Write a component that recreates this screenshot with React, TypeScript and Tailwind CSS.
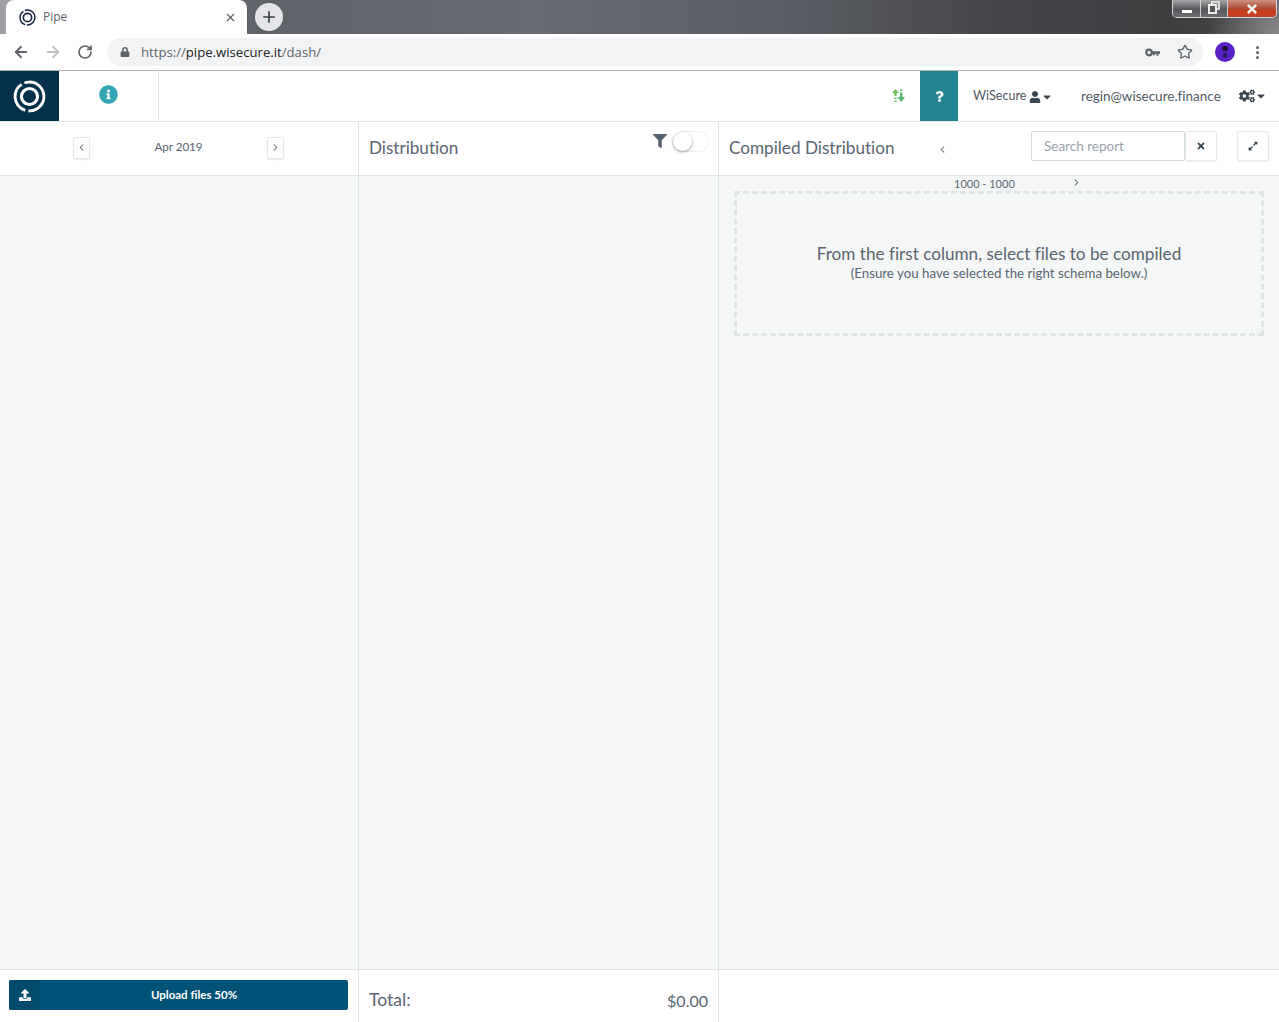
import React from "react";
import { ArrowLeft, ArrowRight, RotateCw, Star, Plus, X, ChevronLeft, ChevronRight } from "lucide-react";
import { FaUser, FaCogs, FaCaretDown, FaFilter, FaTimes, FaExpandAlt, FaQuestion, FaInfoCircle, FaLock, FaUpload } from "react-icons/fa";

function Logo({ size, color }: { size: number; color: string }) {
  return (
    <svg width={size} height={size} viewBox="0 0 32 32" fill="none" stroke={color}>
      <circle cx="16" cy="16" r="14" strokeWidth="2.8" strokeDasharray="23.5 3 31.5 3 27 0" transform="rotate(-2 16 16)" />
      <circle cx="16" cy="16" r="7.8" strokeWidth="3" />
    </svg>
  );
}

function PagerBtn({ right }: { right?: boolean }) {
  return (
    <div className="flex h-[22px] w-[17px] items-center justify-center rounded-[2px] border border-[#e4e9ea] bg-white shadow-[0_1px_1px_rgba(0,0,0,0.08)]">
      {right ? <ChevronRight size={11} strokeWidth={2.2} className="text-[#5a6672]" /> : <ChevronLeft size={11} strokeWidth={2.2} className="text-[#5a6672]" />}
    </div>
  );
}

export default function App() {
  return (
    <div className="flex h-[1022px] w-[1279px] flex-col overflow-hidden bg-white font-['Lato','Noto_Sans',sans-serif] text-[#56616b] [font-variant-ligatures:none]">
      {/* window title strip */}
      <div className="flex h-[34px] items-end bg-[radial-gradient(circle_at_100%_100%,#8a8a8c_0%,rgba(138,138,140,0)_70px),linear-gradient(90deg,#9d9ea2_0%,#a0a1a5_0.5%,#5f6269_20%,#666a72_42%,#5a5d64_62%,#444548_78%,#3d3e40_92%,#4a4a4c_100%)]">
        <div className="ml-[6px] flex h-[34px] w-[241px] items-center rounded-t-[8px] bg-white pl-[13px] pr-[10px]">
          <Logo size={17} color="#16233f" />
          <span className="ml-[7px] flex-1 font-['Open_Sans',sans-serif] text-[12px] text-[#5f6368]">Pipe</span>
          <X size={13} strokeWidth={2} className="text-[#55585d]" />
        </div>
        <div className="mb-[3px] ml-[8px] flex h-[28px] w-[28px] items-center justify-center rounded-full bg-[#e3e5e9]">
          <Plus size={18} strokeWidth={2.2} className="text-[#3b3e43]" />
        </div>
        <div className="flex-1" />
        <div className="mb-[16px] mr-[2px] flex h-[18px] w-[105px] overflow-hidden rounded-b-[5px] border border-t-0 border-[#d6d6d6]">
          <div className="flex w-[28px] items-end justify-center border-r border-[#cfcfcf] bg-[linear-gradient(#a4a5a7,#55575a_55%,#6c6e72)] pb-[4px]">
            <div className="h-[3px] w-[10px] bg-white" />
          </div>
          <div className="relative w-[27px] border-r border-[#cfcfcf] bg-[linear-gradient(#a4a5a7,#55575a_55%,#6c6e72)]">
            <div className="absolute left-[10px] top-[1px] h-[9px] w-[9px] border-2 border-[#dddddd]" />
            <div className="absolute left-[7px] top-[4px] h-[10px] w-[9px] border-2 border-[#eeeeee] bg-[#55575a]" />
          </div>
          <div className="flex flex-1 items-center justify-center bg-[linear-gradient(#c9907f,#b04a34_50%,#cf3a1c_75%,#b8452f)]">
            <FaTimes size={14} className="text-[#eeeeee]" />
          </div>
        </div>
      </div>

      {/* toolbar */}
      <div className="flex h-[37px] items-center border-b border-[#b4b4b4] bg-white pr-[14px]">
        <ArrowLeft size={18} strokeWidth={2.4} className="ml-[12px] text-[#5f6368]" />
        <ArrowRight size={18} strokeWidth={2.4} className="ml-[14px] text-[#bdbfc2]" />
        <RotateCw size={16} strokeWidth={2.6} className="ml-[15px] text-[#5f6368]" />
        <div className="ml-[14px] flex h-[28px] w-[1096px] items-center rounded-full bg-[#f1f3f4] pl-[13px] pr-[10px]">
          <FaLock size={10} className="text-[#5f6368]" />
          <span className="ml-[11px] flex-1 pt-[1px] font-['Open_Sans',sans-serif] text-[13.15px] text-[#5f6368]">
            https://<span className="text-[#202124]">pipe.wisecure.it</span>/dash/
          </span>
          <svg width="15" height="9" viewBox="0 0 15 9" className="mr-[17px] text-[#5f6368]" fill="none">
            <circle cx="4" cy="4.5" r="2.8" stroke="currentColor" strokeWidth="2.2" />
            <path d="M7 3.2h8v2.6h-1.5v2h-2v-2H10v1.4H8V5.8H7z" fill="currentColor" />
          </svg>
          <Star size={16} strokeWidth={2} className="text-[#5f6368]" />
        </div>
        <div className="ml-[12px] flex h-[20px] w-[20px] flex-col items-center justify-center rounded-full bg-[#5b21c9]">
          <div className="h-[5px] w-[6px] rounded-full bg-[#1d1530]" />
          <div className="mt-[2px] h-[5px] w-[4px] rounded-b-full bg-[#2e1a66]" />
        </div>
        <div className="ml-[21px] flex flex-col gap-[2px]">
          <div className="h-[3px] w-[3px] rounded-full bg-[#5f6368]" />
          <div className="h-[3px] w-[3px] rounded-full bg-[#5f6368]" />
          <div className="h-[3px] w-[3px] rounded-full bg-[#5f6368]" />
        </div>
      </div>

      {/* app header */}
      <div className="flex h-[51px] border-b border-[#e4e8e8] bg-white">
        <div className="flex h-[50px] w-[59px] items-center justify-center bg-[#022f4a]">
          <Logo size={33} color="#ffffff" />
        </div>
        <div className="flex w-[100px] items-start justify-center border-r border-[#e4e8e8] pt-[14px]">
          <FaInfoCircle size={19} className="text-[#33a5b5]" />
        </div>
        <div className="flex-1" />
        <div className="flex items-center pb-[1px]">
          <svg width="13" height="15" viewBox="0 0 13 15" fill="none">
            <path d="M0 5 L3.5 1 L7 5 H4.7 V8 H2.3 V5 Z" fill="#6fbf58" />
            <path d="M2.3 9.5h2.4v1.5H2.3zM2.3 12.5h2.4v1.5H2.3z" fill="#7cc26a" />
            <path d="M8 1.5h2.4V3H8zM8 4.5h2.4V9H13L9.2 14 5.4 9H8z" fill="#54b66d" />
          </svg>
        </div>
        <div className="ml-[15px] flex h-[50px] w-[38px] items-center justify-center bg-[#248590]">
          <FaQuestion size={11} className="text-white" />
        </div>
        <div className="ml-[15px] flex w-[108px] items-center pt-[1px] text-[12.6px] text-[#4f5a64]">
          WiSecure
          <FaUser size={12} className="ml-[3px] text-[#3a4650]" />
          <FaCaretDown size={12} className="text-[#3a4650]" />
        </div>
        <div className="flex w-[158px] items-center pt-[1px] text-[13.5px] text-[#4f5a64]">regin@wisecure.finance</div>
        <div className="flex w-[40px] items-center">
          <FaCogs size={16} className="text-[#3a4650]" />
          <FaCaretDown size={12} className="text-[#3a4650]" />
        </div>
      </div>

      {/* columns */}
      <div className="flex min-h-0 flex-1">
        <section className="flex w-[359px] flex-col border-r border-[#e1e6e6]">
          <div className="flex h-[54px] items-center border-b border-[#e1e6e6] bg-white pb-[2px] pl-[73px]">
            <PagerBtn />
            <div className="w-[177px] pb-[2px] text-center text-[11.6px] text-[#5a6570]">Apr 2019</div>
            <PagerBtn right />
          </div>
          <div className="flex-1 bg-[#f5f7f7]" />
          <div className="flex h-[53px] items-start border-t border-[#e1e6e6] bg-white pl-[9px] pt-[10px]">
            <div className="flex h-[30px] w-[339px] overflow-hidden rounded-[2px] bg-[#005276] text-white">
              <div className="flex w-[31px] items-center justify-center bg-[#004a6b]">
                <FaUpload size={12} />
              </div>
              <div className="flex-1 text-center text-[11.5px] font-bold leading-[30px]">Upload files 50%</div>
            </div>
          </div>
        </section>

        <section className="flex w-[360px] flex-col border-r border-[#e1e6e6]">
          <div className="flex h-[54px] border-b border-[#e1e6e6] bg-white pl-[10px] pr-[9px]">
            <div className="flex-1 pt-[14px] text-[17.1px] leading-[24px] text-[#5a6570]">Distribution</div>
            <FaFilter size={14} className="mr-[5px] mt-[12px] text-[#55616c]" />
            <div className="mt-[9px] h-[21px] w-[37px] rounded-full border border-[#eef0f0] bg-white">
              <div className="h-[19px] w-[19px] rounded-full bg-white shadow-[0_1px_3px_rgba(0,0,0,0.4)]" />
            </div>
          </div>
          <div className="flex-1 bg-[#f5f7f7]" />
          <div className="flex h-[53px] items-center justify-between border-t border-[#e1e6e6] bg-white pl-[10px] pr-[10px] pt-[9px] text-[#5a6570]">
            <span className="text-[17.6px]">Total:</span>
            <span className="text-[16px]">$0.00</span>
          </div>
        </section>

        <section className="flex flex-1 flex-col">
          <div className="flex h-[54px] border-b border-[#e1e6e6] bg-white pl-[10px] pr-[10px]">
            <div className="w-[208px] pt-[14px] text-[17.15px] leading-[24px] text-[#5a6570]">Compiled Distribution</div>
            <ChevronLeft size={11} strokeWidth={2.2} className="mt-[22px] text-[#5a6570]" />
            <div className="ml-[83px] mt-[9px] flex h-[30px] w-[154px] items-center rounded-[2px] border border-[#d5dfe1] bg-white pl-[12px] text-[13.5px] text-[#9aa2a9]">
              Search report
            </div>
            <div className="mt-[9px] flex h-[30px] w-[32px] items-center justify-center rounded-[2px] border border-[#e4e9ea] bg-white shadow-[0_1px_1px_rgba(0,0,0,0.06)]">
              <FaTimes size={10} className="text-[#34414c]" />
            </div>
            <div className="ml-[20px] mt-[9px] flex h-[30px] w-[32px] items-center justify-center rounded-[2px] border border-[#e4e9ea] bg-white shadow-[0_1px_1px_rgba(0,0,0,0.06)]">
              <FaExpandAlt size={10} className="text-[#34414c]" />
            </div>
          </div>
          <div className="flex-1 bg-[#f5f7f7] px-[15px]">
            <div className="flex h-[15px] items-center pl-[220px] pt-[2px] text-[11px] text-[#5a6570]">
              <span className="w-[117px]">1000 - 1000</span>
              <ChevronRight size={11} strokeWidth={2.2} className="-mt-[4px] text-[#5a6570]" />
            </div>
            <div className="flex h-[145px] w-[530px] flex-col items-center border-[3px] border-dashed border-[#dfe5e6] pt-[48px]">
              <div className="text-[17.15px] leading-[24px] text-[#5a6570]">From the first column, select files to be compiled</div>
              <div className="text-[13.3px] leading-[14px] text-[#5a6570]">(Ensure you have selected the right schema below.)</div>
            </div>
          </div>
          <div className="h-[53px] border-t border-[#e1e6e6] bg-white" />
        </section>
      </div>
    </div>
  );
}
